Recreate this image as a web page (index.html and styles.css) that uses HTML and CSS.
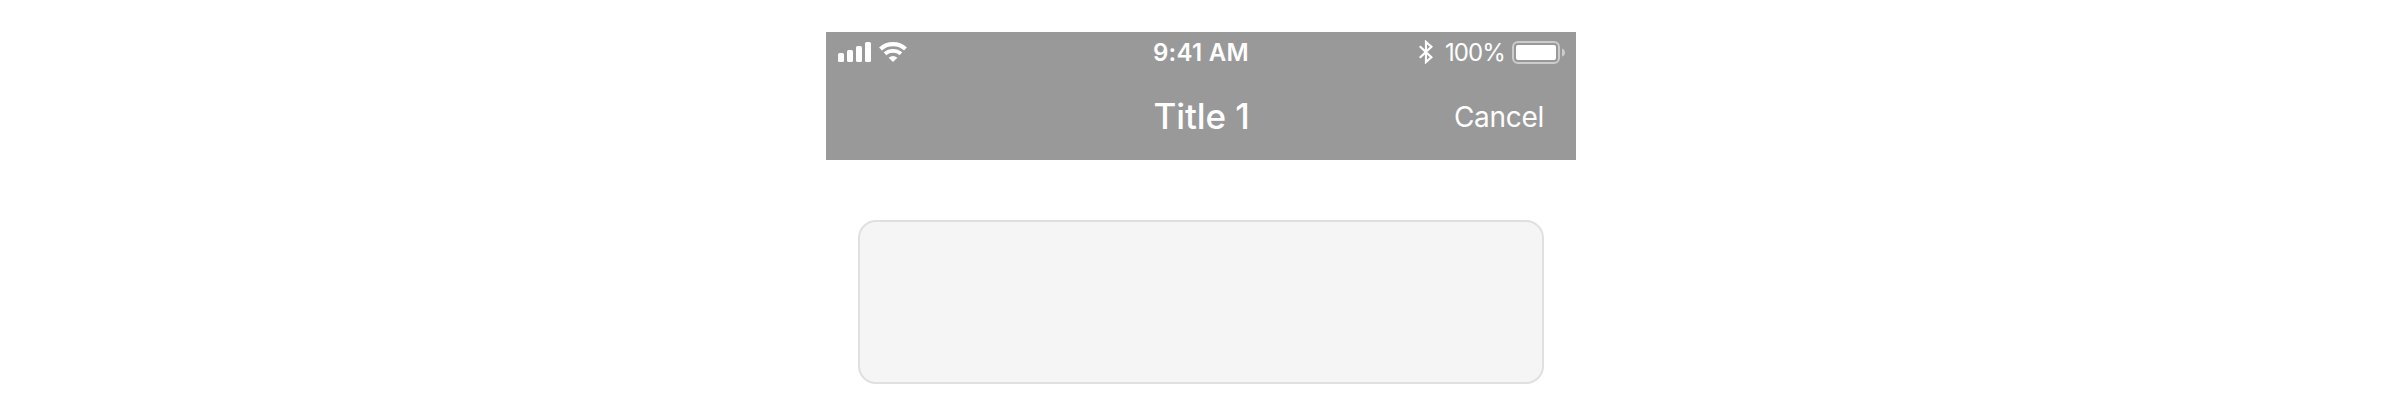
FILE: index.html
```html
<!DOCTYPE html>
<html lang="en">
<head>
<meta charset="utf-8">
<title>Title 1</title>
<link rel="stylesheet" href="styles.css">
</head>
<body>
<main class="screen">
  <header class="header">
    <div class="status">
      <div class="status-left">
        <svg class="signal" width="33" height="20" viewBox="0 0 33 20" fill="#fff"><rect x="0" y="11" width="6" height="9" rx="1.5"/><rect x="9" y="8" width="6" height="12" rx="1.5"/><rect x="18" y="4" width="6" height="16" rx="1.5"/><rect x="27" y="0" width="6" height="20" rx="1.5"/></svg>
        <svg class="wifi" width="28" height="20" viewBox="0 0 28 20" fill="none" stroke="#fff"><path d="M1.5 6.9C8.5.5 19.5.5 26.5 6.9" stroke-width="4.1"/><path d="M6 11.8C10.5 7.9 17.5 7.9 22 11.8" stroke-width="3.9"/><path d="M9.6 15.7Q14 12.3 18.4 15.7L14 20Z" fill="#fff" stroke="none"/></svg>
      </div>
      <div class="time">9:41 AM</div>
      <div class="status-right">
        <svg class="bluetooth" width="14" height="24" viewBox="0 0 14 24" fill="none" stroke="#fff" stroke-width="2.2"><path d="M.8 6.3L12.4 17.3L7 22V2L12.4 6.7L.8 17.7"/></svg>
        <span class="percent">100%</span>
        <svg class="battery" width="53" height="23" viewBox="0 0 53 23"><rect x="1" y="1" width="46" height="21" rx="5" fill="none" stroke="#ccc" stroke-width="2"/><rect x="4" y="4" width="40" height="15" rx="2" fill="#fff"/><path d="M50 7.5Q53 8.5 53 11.5T50 15.5Z" fill="#ccc"/></svg>
      </div>
    </div>
    <div class="nav">
      <h1 class="title">Title 1</h1>
      <span class="cancel">Cancel</span>
    </div>
  </header>
  <section class="card"></section>
</main>
</body>
</html>
```

FILE: styles.css
```css
body {
  margin: 0;
  background: #fff;
  font-family: Inter, "Liberation Sans", sans-serif;
}
.screen {
  width: 750px;
  margin: 0 auto;
  padding: 32px 0 0 2px;
}
.header {
  height: 128px;
  background: #999;
  color: #fff;
}
.status,
.nav {
  display: grid;
  align-items: center;
}
.status {
  grid-template-columns: 1fr auto 1fr;
  height: 40px;
  font-size: 24px;
  line-height: 40px;
}
.status-left,
.status-right {
  display: flex;
  align-items: center;
}
.status-left {
  gap: 8px;
  padding-left: 12px;
}
.status-right {
  justify-content: flex-end;
  padding-right: 11px;
}
.time {
  padding-top: 2px;
  line-height: 38px;
  font-weight: 600;
  letter-spacing: 0.3px;
  white-space: nowrap;
}
.percent {
  padding-top: 2px;
  line-height: 38px;
  font-weight: 400;
  letter-spacing: -0.9px;
}
.bluetooth {
  margin-right: 12px;
}
.battery {
  margin-left: 7px;
}
.nav {
  grid-template-columns: 1fr auto 1fr;
  height: 88px;
}
.title {
  grid-column: 2;
  margin: 0;
  padding-left: 1px;
  font-size: 35px;
  font-weight: 500;
  letter-spacing: -0.1px;
  line-height: 88px;
}
.cancel {
  justify-self: end;
  padding: 2px 32px 0 0;
  font-size: 28px;
  font-weight: 400;
  letter-spacing: -0.3px;
  line-height: 86px;
}
.card {
  box-sizing: border-box;
  height: 164px;
  margin: 60px 32px 0;
  border: 2px solid #e0e0e0;
  border-radius: 18px;
  background: #f5f5f5;
}
```
